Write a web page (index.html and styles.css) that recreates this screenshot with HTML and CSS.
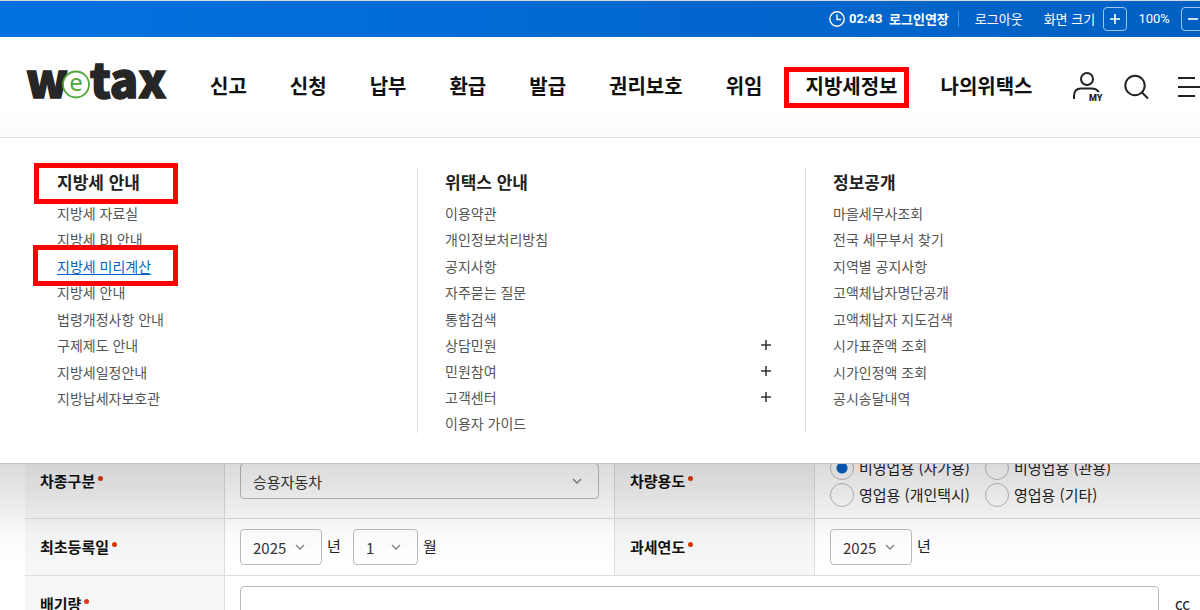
FILE: index.html
```html
<!DOCTYPE html>
<html lang="ko">
<head>
<meta charset="utf-8">
<title>wetax</title>
<link rel="stylesheet" href="styles.css">
</head>
<body>
<div class="site-top">
  <div class="topbar">
    <svg class="clock" viewBox="0 0 16 16" aria-hidden="true"><circle cx="8" cy="8" r="7.2"/><path d="M8 3.5V8.5H12"/></svg>
    <span class="time">02:43</span>
    <button type="button" class="top-btn extend">로그인연장</button>
    <span class="divider"></span>
    <button type="button" class="top-btn logout">로그아웃</button>
    <span class="zoom-label">화면 크기</span>
    <button type="button" class="zoom-btn" aria-label="확대"><svg viewBox="0 0 12 12"><path d="M1 6H11M6 1V11"/></svg></button>
    <span class="zoom-value">100%</span>
    <button type="button" class="zoom-btn" aria-label="축소"><svg viewBox="0 0 12 12"><path d="M1 6H11"/></svg></button>
  </div>
  <header class="header">
    <a class="logo" href="#" aria-label="wetax">
      <svg viewBox="0 0 140 40">
        <text class="logo-bold" x="1" y="34">w</text>
        <text class="logo-bold" x="65" y="34">tax</text>
        <circle class="logo-ring" cx="51" cy="20.500" r="13"/>
        <text class="logo-e" x="51" y="27">e</text>
      </svg>
    </a>
    <nav class="nav">
      <a href="#">신고</a>
      <a href="#">신청</a>
      <a href="#">납부</a>
      <a href="#">환급</a>
      <a href="#">발급</a>
      <a href="#">권리보호</a>
      <a href="#">위임</a>
      <a href="#" class="marked mark-nav">지방세정보</a>
      <a href="#">나의위택스</a>
    </nav>
    <div class="tools">
      <button type="button" aria-label="마이페이지"><svg class="ico" viewBox="0 0 32 32"><circle cx="15" cy="8" r="6"/><path d="M2 28V25C2 20 5 17.500 9 17.500H20C23 17.500 25 18.500 27 21"/><text x="17" y="30">MY</text></svg></button>
      <button type="button" aria-label="검색"><svg class="ico" viewBox="0 0 32 32"><circle cx="14" cy="14.500" r="9.700"/><path d="M21 21.500L27 27.500"/></svg></button>
      <button type="button" aria-label="전체메뉴"><svg class="ico" viewBox="0 0 32 32"><path d="M8 7H25M8 16H32M8 25H25"/></svg></button>
    </div>
  </header>
  <div class="mega">
    <section class="mega-col">
      <h2><span class="marked mark-title">지방세 안내</span></h2>
      <ul>
        <li><a href="#">지방세 자료실</a></li>
        <li><a href="#">지방세 BI 안내</a></li>
        <li><a href="#" class="current marked mark-item">지방세 미리계산</a></li>
        <li><a href="#">지방세 안내</a></li>
        <li><a href="#">법령개정사항 안내</a></li>
        <li><a href="#">구제제도 안내</a></li>
        <li><a href="#">지방세일정안내</a></li>
        <li><a href="#">지방납세자보호관</a></li>
      </ul>
    </section>
    <section class="mega-col">
      <h2>위택스 안내</h2>
      <ul>
        <li><a href="#">이용약관</a></li>
        <li><a href="#">개인정보처리방침</a></li>
        <li><a href="#">공지사항</a></li>
        <li><a href="#">자주묻는 질문</a></li>
        <li><a href="#">통합검색</a></li>
        <li class="expand"><a href="#">상담민원</a><button type="button" aria-label="상담민원 펼치기"><svg viewBox="0 0 10 10"><path d="M0 5H10M5 0V10"/></svg></button></li>
        <li class="expand"><a href="#">민원참여</a><button type="button" aria-label="민원참여 펼치기"><svg viewBox="0 0 10 10"><path d="M0 5H10M5 0V10"/></svg></button></li>
        <li class="expand"><a href="#">고객센터</a><button type="button" aria-label="고객센터 펼치기"><svg viewBox="0 0 10 10"><path d="M0 5H10M5 0V10"/></svg></button></li>
        <li><a href="#">이용자 가이드</a></li>
      </ul>
    </section>
    <section class="mega-col">
      <h2>정보공개</h2>
      <ul>
        <li><a href="#">마을세무사조회</a></li>
        <li><a href="#">전국 세무부서 찾기</a></li>
        <li><a href="#">지역별 공지사항</a></li>
        <li><a href="#">고액체납자명단공개</a></li>
        <li><a href="#">고액체납자 지도검색</a></li>
        <li><a href="#">시가표준액 조회</a></li>
        <li><a href="#">시가인정액 조회</a></li>
        <li><a href="#">공시송달내역</a></li>
      </ul>
    </section>
  </div>
</div>
<main class="content">
  <table class="form">
    <colgroup><col class="c-label"><col class="c-field"><col class="c-label"><col></colgroup>
    <tr class="row-tall">
      <th scope="row"><label class="req" for="kind">차종구분</label></th>
      <td><div class="select wide"><select id="kind"><option>승용자동차</option></select><svg viewBox="0 0 10 6"><path d="M1 1L5 5L9 1"/></svg></div></td>
      <th scope="row"><span class="req">차량용도</span></th>
      <td>
        <div class="radios">
          <label><input type="radio" name="use" checked>비영업용 (자가용)</label>
          <label><input type="radio" name="use">비영업용 (관용)</label>
          <label><input type="radio" name="use">영업용 (개인택시)</label>
          <label><input type="radio" name="use">영업용 (기타)</label>
        </div>
      </td>
    </tr>
    <tr>
      <th scope="row"><span class="req">최초등록일</span></th>
      <td>
        <div class="fields">
          <div class="select year"><select id="reg-year"><option>2025</option></select><svg viewBox="0 0 10 6"><path d="M1 1L5 5L9 1"/></svg></div>
          <label class="unit" for="reg-year">년</label>
          <div class="select month"><select id="reg-month"><option>1</option></select><svg viewBox="0 0 10 6"><path d="M1 1L5 5L9 1"/></svg></div>
          <label class="unit" for="reg-month">월</label>
        </div>
      </td>
      <th scope="row"><span class="req">과세연도</span></th>
      <td>
        <div class="fields">
          <div class="select year"><select id="tax-year"><option>2025</option></select><svg viewBox="0 0 10 6"><path d="M1 1L5 5L9 1"/></svg></div>
          <label class="unit" for="tax-year">년</label>
        </div>
      </td>
    </tr>
    <tr>
      <th scope="row"><label class="req" for="volume">배기량</label></th>
      <td colspan="3"><div class="fields volume"><input id="volume" type="text"><span>cc</span></div></td>
    </tr>
  </table>
</main>
</body>
</html>
```
FILE: styles.css
```css
* { box-sizing: border-box; }
body {
  margin: 0;
  overflow-x: clip;
  background: #fff;
  color: #222;
  font: 15px/24px "Noto Sans CJK KR", "Noto Sans", sans-serif;
}
a { color: inherit; text-decoration: none; }
button { padding: 0; border: 0; background: none; color: inherit; font: inherit; }
svg { display: block; fill: none; stroke: currentColor; }
h2, ul { margin: 0; padding: 0; list-style: none; }

.site-top { position: relative; z-index: 1; }

/* utility bar */
.topbar {
  display: flex;
  align-items: center;
  height: 37px;
  padding-left: 829px;
  overflow: hidden;
  border-top: 1px solid #d5dbe0;
  background: linear-gradient(90deg, #0271e0, #0160c2);
  color: #fff;
  font-size: 13px;
  white-space: nowrap;
}
.topbar > * { flex: none; }
.clock { width: 16px; height: 16px; stroke-width: 1.400; margin-right: 4px; }
.time { width: 40px; font-family: Roboto, sans-serif; font-weight: 700; }
.extend { font-weight: 700; }
.divider { width: 1px; height: 16px; margin: 0 16px 0 9px; background: #4b93de; }
.logout { margin-right: 21px; }
.zoom-label { margin-right: 8px; }
.zoom-btn {
  display: grid;
  place-items: center;
  width: 24px;
  height: 24px;
  border: 1px solid #9fc5ee;
  border-radius: 4px;
}
.zoom-btn svg { width: 12px; height: 12px; stroke-width: 1.600; }
.zoom-value { width: 54px; text-align: center; font-family: Roboto, sans-serif; }

/* main header */
.header {
  display: flex;
  align-items: center;
  height: 101px;
  padding-left: 25px;
  overflow: hidden;
  border-bottom: 1px solid #ddd;
  background: linear-gradient(#fff 70%, #fbfbfb);
}
.logo { width: 140px; margin-right: 45px; flex: none; }
.logo svg { width: 140px; height: 40px; margin-bottom: 6px; overflow: visible; stroke: none; }
.logo-bold { fill: #262626; stroke: #262626; stroke-width: 1.500; font: 900 47px "Noto Sans CJK KR", sans-serif; }
.logo-e { fill: #52a838; font: 400 24px "Noto Sans", sans-serif; text-anchor: middle; }
.logo-ring { fill: #fff; stroke: #52a838; stroke-width: 1.800; }
.nav {
  display: flex;
  flex: none;
  gap: 43px;
  color: #111;
  font-size: 20px;
  font-weight: 700;
  line-height: 30px;
  padding-bottom: 2px;
  white-space: nowrap;
}
.tools { display: flex; flex: none; gap: 17px; margin-left: 40px; color: #222; }
.ico { width: 32px; height: 32px; stroke-width: 2; }
.ico text { fill: currentColor; stroke: none; font: 900 9px Roboto, sans-serif; }

/* red highlight frames */
.marked { position: relative; }
.marked::after { content: ""; position: absolute; border: 5px solid #f00; pointer-events: none; }
.mark-nav::after { inset: -4px -12px -7px -21px; }
.mark-title::after { inset: -6px -38px -10px -23px; }
.mark-item::after { inset: -8px -27px -7px -24px; }

/* open menu panel */
.mega {
  position: relative;
  display: grid;
  grid-template-columns: repeat(3, 1fr);
  padding: 30px 6px 30px 30px;
  border-bottom: 1px solid #c4c4c4;
  background: #fff;
}
.mega::after {
  content: "";
  position: absolute;
  inset: 100% 0 auto 0;
  height: 100px;
  margin-top: 1px;
  background: linear-gradient(rgba(0, 0, 0, .14), rgba(0, 0, 0, .07) 45%, rgba(0, 0, 0, .02) 70%, transparent);
  pointer-events: none;
}
.mega-col { padding: 0 32px 0 27px; }
.mega-col + .mega-col { box-shadow: -1px 0 #ddd; }
.mega h2 { margin-bottom: 4px; color: #222; font-size: 17px; line-height: 28px; }
.mega ul { margin-bottom: -3px; color: #555; font-size: 14px; line-height: 26px; }
.mega li { display: flex; justify-content: space-between; align-items: center; height: 26px; }
.mega li:nth-child(2n) { margin-bottom: 1px; }
.mega li.expand { margin-bottom: 0; }
.mega li svg { width: 10px; height: 10px; margin-right: 3px; color: #333; stroke-width: 1.500; }
.mega .current { color: #0562c4; text-decoration: underline; text-underline-offset: 2px; }

/* form table under the panel */
.content { margin: -20px 0 0 25px; }
.form { width: 100%; table-layout: fixed; border-collapse: separate; border-spacing: 0; }
.c-label { width: 200px; }
.c-field { width: 390px; }
.form tr { height: 57px; }
.form .row-tall { height: 75px; }
.form th, .form td { padding: 10px 15px; border: 0 solid #ddd; border-width: 0 1px 1px 0; vertical-align: middle; }
.form th { background: #f7f7f7; color: #111; text-align: left; }
.form td:last-child { border-right: 0; }
.req::after {
  content: "";
  display: inline-block;
  width: 5px;
  height: 5px;
  margin-left: 3px;
  border-radius: 50%;
  background: #dc3a0a;
  vertical-align: 6px;
}
.fields { display: flex; align-items: center; }
.select { position: relative; height: 36px; }
.select select {
  width: 100%;
  height: 100%;
  padding: 2px 12px 0;
  appearance: none;
  border: 1px solid #bbb;
  border-radius: 4px;
  background: transparent;
  color: #333;
  font: inherit;
}
.select svg { position: absolute; top: 15px; right: 17px; width: 10px; height: 6px; color: #888; stroke-width: 1.500; pointer-events: none; }
.select.wide { max-width: 359px; }
.select.year { width: 82px; }
.select.month { width: 65px; }
.unit { width: 31px; padding: 0 0 2px 5px; }
.volume { gap: 16px; margin-right: -5px; }
.volume input {
  flex: 1;
  min-width: 0;
  height: 36px;
  padding: 0 12px;
  border: 1px solid #bbb;
  border-radius: 4px;
  font: inherit;
}
.radios { display: grid; grid-template-columns: repeat(2, 155px); line-height: 27px; white-space: nowrap; }
.radios label { display: flex; align-items: center; gap: 5px; }
.radios input {
  width: 24px;
  height: 24px;
  margin: 0;
  appearance: none;
  border: 1px solid #bbb;
  border-radius: 50%;
}
.radios input:checked { background: radial-gradient(circle, #0562c4 5px, transparent 6px); }
```
